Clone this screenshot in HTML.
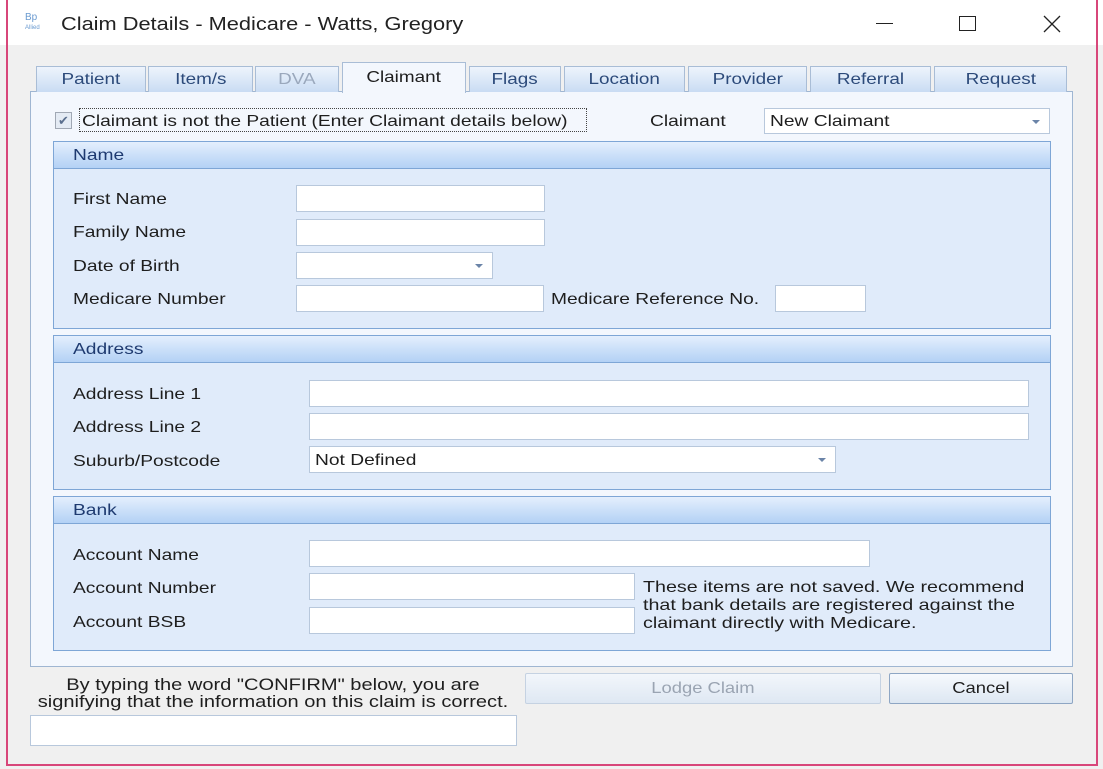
<!DOCTYPE html>
<html><head><style>
*{box-sizing:border-box;margin:0;padding:0}
body{width:1103px;height:769px;background:#fff;font-family:"Liberation Sans",sans-serif;font-size:16px;color:#1e1e1e;position:relative;overflow:hidden}
.a{position:absolute}
.tab{position:absolute;top:66px;height:26px;border:1px solid #a9bdd6;border-bottom:none;background:linear-gradient(#eef4fc,#c9dcf3);color:#2c4a7a;text-align:center;line-height:26px;font-size:16px}
.tab span{display:inline-block;transform:scaleX(1.18)}
.grp{position:absolute;left:53px;width:998px;border:1px solid #7ea6d6;background:#e0ebfa}
.gh{height:27px;background:linear-gradient(#e4effd,#b3d1f5);border-bottom:1px solid #7ea6d6;color:#1e3a70;padding-left:19px;line-height:28px}
.gh span{display:inline-block;transform:scaleX(1.2);transform-origin:left}
.in{position:absolute;background:#fff;border:1px solid #b8c8dc}
.in span.t{display:inline-block;transform:scaleX(1.2);transform-origin:left}
.lb{position:absolute;line-height:18px;transform:scaleX(1.2);transform-origin:left;white-space:nowrap;margin-top:2px}
.arr{position:absolute;right:9px;top:11px;width:0;height:0;border-left:4px solid transparent;border-right:4px solid transparent;border-top:4px solid #6b84a8}
.btn{position:absolute;border:1px solid #a8b8cc;border-radius:2px;text-align:center;line-height:30px}
.btn span{display:inline-block;transform:scaleX(1.15)}
</style></head><body>
<div class="a" style="left:0;top:45px;width:1103px;height:724px;background:#f0f0f0"></div>
<div class="a" style="left:6px;top:0;width:2px;height:766px;background:#d8467a"></div>
<div class="a" style="left:1096px;top:0;width:2px;height:766px;background:#d8467a"></div>
<div class="a" style="left:6px;top:764px;width:1092px;height:2px;background:#d8467a"></div>
<div class="a" style="left:25px;top:13px;font-size:10px;color:#6a9ad0;line-height:9px">Bp<br><span style="font-size:6px">Allied</span></div>
<div class="a" style="left:61px;top:14px;font-size:18px;color:#222;transform:scaleX(1.21);transform-origin:left;white-space:nowrap">Claim Details - Medicare - Watts, Gregory</div>
<div class="a" style="left:876px;top:23px;width:17px;height:1px;background:#222"></div>
<div class="a" style="left:959px;top:16px;width:17px;height:15px;border:1px solid #222"></div>
<svg class="a" style="left:1043px;top:15px" width="18" height="18"><path d="M1 1L17 17M17 1L1 17" stroke="#222" stroke-width="1.3"/></svg>

<div class="a" style="left:30px;top:91px;width:1043px;height:576px;background:#f3f7fd;border:1px solid #9fb6d2"></div>
<div class="tab" style="left:36px;width:110px"><span>Patient</span></div>
<div class="tab" style="left:148px;width:105px"><span>Item/s</span></div>
<div class="tab" style="left:255px;width:84px;color:#9aa8bc"><span>DVA</span></div>
<div class="tab" style="left:342px;width:124px;top:62px;height:31px;background:#f3f7fd;color:#1e1e1e;line-height:30px"><span>Claimant</span></div>
<div class="tab" style="left:469px;width:92px"><span>Flags</span></div>
<div class="tab" style="left:564px;width:121px"><span>Location</span></div>
<div class="tab" style="left:688px;width:119px"><span>Provider</span></div>
<div class="tab" style="left:810px;width:121px"><span>Referral</span></div>
<div class="tab" style="left:934px;width:133px"><span>Request</span></div>

<div class="a" style="left:55px;top:112px;width:17px;height:17px;border:1px solid #a0a8b4;background:#e4ebf4;color:#5a6f8e;font-size:13px;text-align:center;line-height:15px">✔</div>
<div class="a" style="left:79px;top:108px;width:508px;height:24px;border:1px dotted #444"></div>
<div class="lb" style="left:82px;top:111px">Claimant is not the Patient (Enter Claimant details below)</div>
<div class="lb" style="left:650px;top:111px">Claimant</div>
<div class="in" style="left:764px;top:108px;width:286px;height:26px;padding-left:5px;line-height:26px"><span class="t">New Claimant</span><span class="arr"></span></div>

<div class="grp" style="top:141px;height:188px"><div class="gh"><span>Name</span></div></div>
<div class="lb" style="left:73px;top:189px">First Name</div>
<div class="in" style="left:296px;top:185px;width:249px;height:27px"></div>
<div class="lb" style="left:73px;top:222px">Family Name</div>
<div class="in" style="left:296px;top:219px;width:249px;height:27px"></div>
<div class="lb" style="left:73px;top:256px">Date of Birth</div>
<div class="in" style="left:296px;top:252px;width:197px;height:27px"><span class="arr"></span></div>
<div class="lb" style="left:73px;top:289px">Medicare Number</div>
<div class="in" style="left:296px;top:285px;width:248px;height:27px"></div>
<div class="lb" style="left:551px;top:289px">Medicare Reference No.</div>
<div class="in" style="left:775px;top:285px;width:91px;height:27px"></div>

<div class="grp" style="top:335px;height:155px"><div class="gh"><span>Address</span></div></div>
<div class="lb" style="left:73px;top:384px">Address Line 1</div>
<div class="in" style="left:309px;top:380px;width:720px;height:27px"></div>
<div class="lb" style="left:73px;top:417px">Address Line 2</div>
<div class="in" style="left:309px;top:413px;width:720px;height:27px"></div>
<div class="lb" style="left:73px;top:451px">Suburb/Postcode</div>
<div class="in" style="left:309px;top:446px;width:527px;height:27px;padding-left:5px;line-height:27px"><span class="t">Not Defined</span><span class="arr"></span></div>

<div class="grp" style="top:496px;height:155px"><div class="gh"><span>Bank</span></div></div>
<div class="lb" style="left:73px;top:545px">Account Name</div>
<div class="in" style="left:309px;top:540px;width:561px;height:27px"></div>
<div class="lb" style="left:73px;top:578px">Account Number</div>
<div class="in" style="left:309px;top:573px;width:326px;height:27px"></div>
<div class="lb" style="left:73px;top:612px">Account BSB</div>
<div class="in" style="left:309px;top:607px;width:326px;height:27px"></div>
<div class="lb" style="left:643px;top:577px;transform:scaleX(1.23)">These items are not saved. We recommend<br>that bank details are registered against the<br>claimant directly with Medicare.</div>

<div class="a" style="left:30px;top:676px;width:486px;text-align:center;line-height:17px;font-size:17px;transform:scaleX(1.18);white-space:nowrap">By typing the word "CONFIRM" below, you are<br>signifying that the information on this claim is correct.</div>
<div class="in" style="left:30px;top:715px;width:487px;height:31px"></div>
<div class="btn" style="left:525px;top:673px;width:356px;height:31px;background:linear-gradient(#f2f6fb,#dfe8f3);color:#9aa4b2;border-color:#c5d2e2"><span>Lodge Claim</span></div>
<div class="btn" style="left:889px;top:673px;width:184px;height:31px;background:linear-gradient(#f6f9fd,#dde7f2);border-color:#8ea6c4"><span>Cancel</span></div>
</body></html>
